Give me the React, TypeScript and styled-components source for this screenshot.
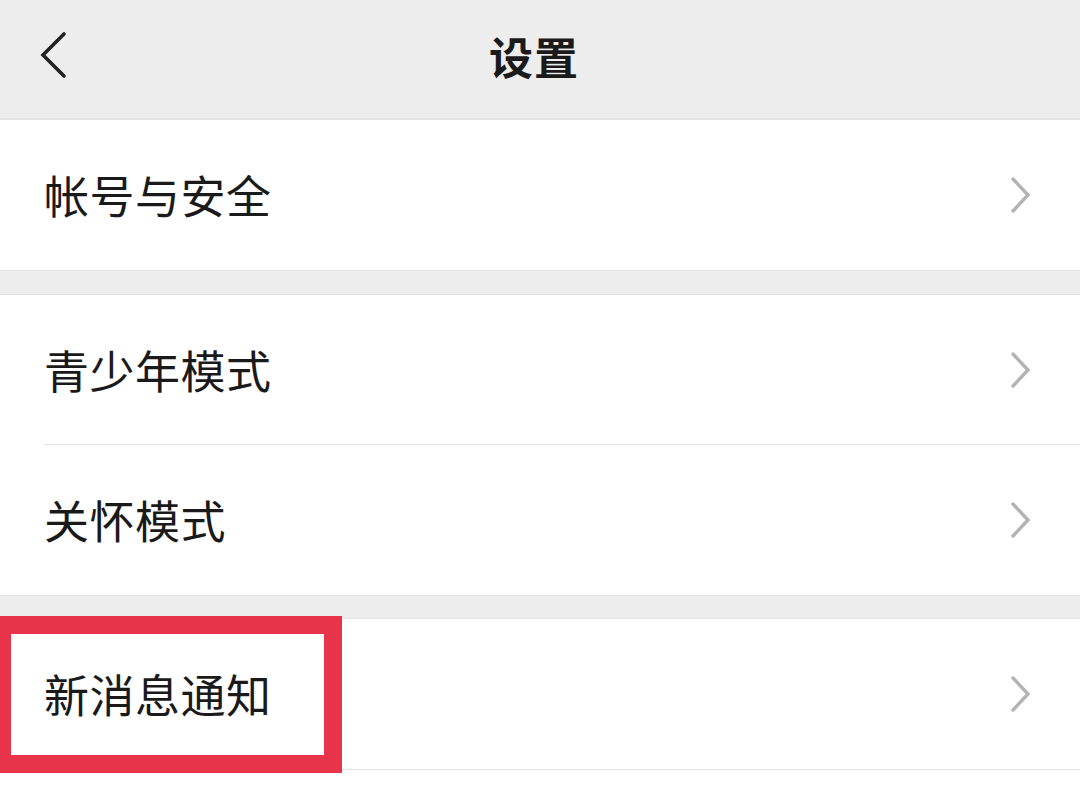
import styled, { createGlobalStyle } from 'styled-components'

const GlobalStyle = createGlobalStyle`
	html, body {
		margin: 0;
		padding: 0;
		background: #ededed;
		font-family: "Noto Sans CJK SC", "Noto Sans", sans-serif;
	}
`

const Page = styled.div`
	position: relative;
	width: 1080px;
	height: 810px;
	overflow: hidden;
	background: #ededed;
	display: flex;
	flex-direction: column;
`

const Header = styled.header`
	position: relative;
	height: 119px;
	flex-shrink: 0;
	display: flex;
	align-items: center;
	justify-content: center;
	border-bottom: 1px solid #e2e2e2;
	box-sizing: border-box;
`

const BackButton = styled.button`
	position: absolute;
	left: 36px;
	top: 28px;
	width: 36px;
	height: 52px;
	padding: 0;
	border: none;
	background: none;
	display: flex;
	align-items: center;
	justify-content: center;
`

const Title = styled.h1`
	margin: -7px 12px 0 0;
	font-size: 44px;
	font-weight: 700;
	color: #1a1a1a;
	letter-spacing: 1px;
`

const Section = styled.section<{ $gap: number }>`
	margin-top: ${p => p.$gap}px;
	flex-shrink: 0;
	background: #fff;
	border-top: 1px solid #e4e4e4;
	border-bottom: 1px solid #e4e4e4;
`

const Rest = styled.div`
	flex: 1;
	background: #fff;
`

const Row = styled.div<{ $divider?: boolean }>`
	position: relative;
	height: 150px;
	display: flex;
	align-items: center;
	justify-content: space-between;
	padding: 0 48px 0 44px;
	box-sizing: border-box;
	${p =>
		p.$divider &&
		`&::after {
			content: '';
			position: absolute;
			left: 43px;
			right: 0;
			bottom: 0;
			height: 1px;
			background: #e6e6e6;
		}`}
`

const Label = styled.span`
	font-size: 45px;
	color: #1a1a1a;
	letter-spacing: 0.5px;
	margin-top: -2px;
`

const Highlight = styled.div`
	position: absolute;
	left: -7px;
	top: 616px;
	width: 349px;
	height: 157px;
	border: 18px solid #e8344a;
	box-sizing: border-box;
	pointer-events: none;
`

const BackIcon = () => (
	<svg width="36" height="52" viewBox="0 0 36 52">
		<path d="M28 6 L7 27 L28 48" fill="none" stroke="#222" strokeWidth="3.6" strokeLinecap="round" strokeLinejoin="miter" />
	</svg>
)

const ChevronRight = () => (
	<svg width="22" height="38" viewBox="0 0 22 38">
		<path d="M3 3 L18 19 L3 35" fill="none" stroke="#b3b3b3" strokeWidth="3.4" strokeLinecap="round" />
	</svg>
)

const groups = [
	{ gap: 0, items: ['帐号与安全'] },
	{ gap: 23, items: ['青少年模式', '关怀模式'] },
	{ gap: 22, items: ['新消息通知'] },
]

export default function App() {
	return (
		<Page>
			<GlobalStyle />
			<Header>
				<BackButton aria-label="返回">
					<BackIcon />
				</BackButton>
				<Title>设置</Title>
			</Header>
			{groups.map((g, gi) => (
				<Section key={gi} $gap={g.gap}>
					{g.items.map((item, i) => (
						<Row key={item} $divider={i < g.items.length - 1}>
							<Label>{item}</Label>
							<ChevronRight />
						</Row>
					))}
				</Section>
			))}
			<Rest />
			<Highlight />
		</Page>
	)
}
